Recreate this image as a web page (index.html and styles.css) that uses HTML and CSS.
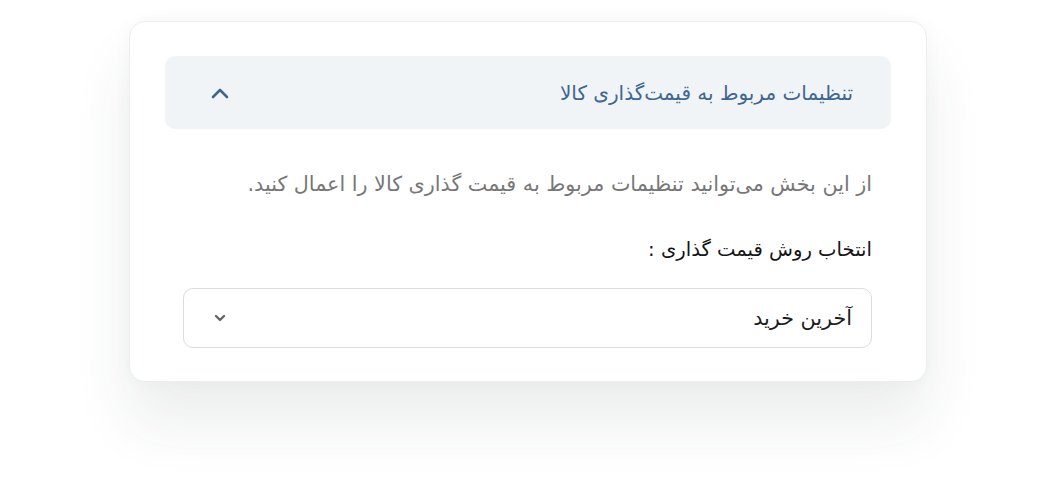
FILE: index.html
```html
<!DOCTYPE html>
<html lang="fa" dir="rtl">
<head>
  <meta charset="UTF-8">
  <title>تنظیمات قیمت‌گذاری</title>
  <link rel="stylesheet" href="styles.css">
</head>
<body>
  <div class="card">
    <div class="panel-head">
      <span class="panel-title">تنظیمات مربوط به قیمت‌گذاری کالا</span>
      <svg class="chev-up" width="20" height="14" viewBox="0 0 20 14">
        <path d="M3 11 L10 4 L17 11" fill="none" stroke="#3e6690" stroke-width="2.6" stroke-linecap="round" stroke-linejoin="round"/>
      </svg>
    </div>
    <div class="panel-body">
      <p class="desc">از این بخش می‌توانید تنظیمات مربوط به قیمت گذاری کالا را اعمال کنید.</p>
      <label class="field-label">انتخاب روش قیمت گذاری :</label>
      <div class="select">
        <span class="select-value">آخرین خرید</span>
        <svg class="chev-down" width="14" height="10" viewBox="0 0 14 10">
          <path d="M3 3 L7 7 L11 3" fill="none" stroke="#666" stroke-width="2.4" stroke-linecap="round" stroke-linejoin="round"/>
        </svg>
      </div>
    </div>
  </div>
</body>
</html>
```

FILE: styles.css
```css
* { box-sizing: border-box; margin: 0; padding: 0; }
html, body { min-height: 100vh; }
body {
  background: #fff;
  font-family: "DejaVu Sans", sans-serif;
  color: #1a1a1a;
  padding-top: 21px;
}
.card {
  width: 798px;
  margin: 0 auto;
  padding: 34px 35px 33px;
  background: #fff;
  border: 1px solid #eceff0;
  border-radius: 16px;
  box-shadow: 0 40px 60px rgba(40, 50, 50, 0.09), 0 0 20px rgba(40, 50, 50, 0.03);
}
.panel-head {
  height: 73px;
  display: flex;
  align-items: center;
  justify-content: space-between;
  padding: 0 38px 0 45px;
  background: #f1f4f7;
  border-radius: 10px;
}
.panel-title { font-size: 20px; color: #3e6690; }
.chev-up { display: block; }
.panel-body { padding: 0 19px 0 18px; }
.desc {
  margin-top: 41px;
  font-size: 20.7px;
  line-height: 28px;
  color: #777;
}
.field-label {
  display: block;
  margin: 38px 0 24px;
  font-size: 19.6px;
  line-height: 28px;
  color: #151515;
}
.select {
  height: 60px;
  display: flex;
  align-items: center;
  justify-content: space-between;
  padding: 0 19px 0 29px;
  border: 1px solid #dcdcdc;
  border-radius: 10px;
  font-size: 20.7px;
  color: #1c1c1c;
}
.chev-down { display: block; }
```
